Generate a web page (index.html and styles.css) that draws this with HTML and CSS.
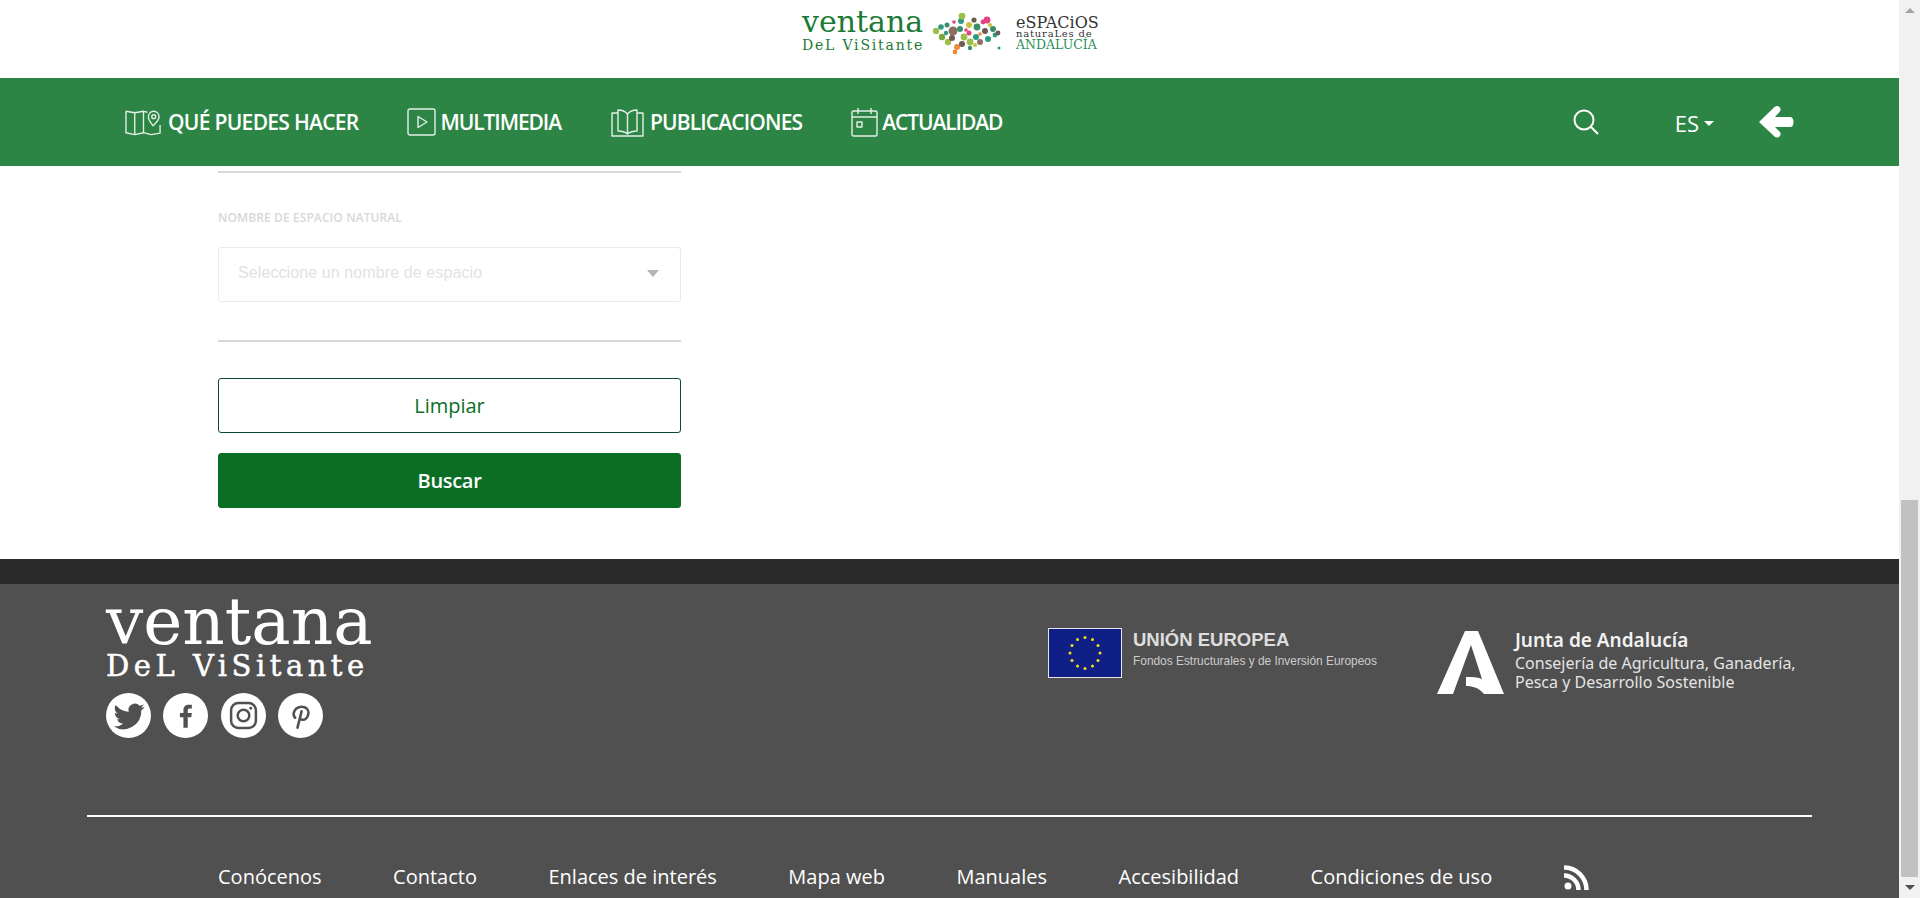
FILE: index.html
```html
<!DOCTYPE html>
<html lang="es">
<head>
    <meta charset="UTF-8">
    <title>Ventana del Visitante</title>
    <link rel="stylesheet" href="styles.css">
</head>
<body>

<div class="app">
    <div class="page">
        <header class="brand">
            <div class="brand-ventana">
                <span class="brand-big">ventana</span>
                <span class="brand-small">DeL ViSitante</span>
            </div>
            <svg class="brand-map" viewBox="0 0 70 42" width="70" height="42">
                <circle cx="3" cy="18" r="3.200" fill="#9bbf4a"/><circle cx="9" cy="24" r="3.200" fill="#7aa83c"/><circle cx="8" cy="14" r="2.800" fill="#2f9a7e"/>
                <circle cx="14" cy="12" r="2.500" fill="#3a8f6a"/><circle cx="15" cy="29" r="3.200" fill="#9bbf4a"/><circle cx="20" cy="18" r="4.500" fill="#8a6f62"/>
                <circle cx="21" cy="9" r="1.800" fill="#e8417f"/><circle cx="19" cy="25" r="3" fill="#6d5a50"/><circle cx="24" cy="34" r="3" fill="#f08a3c"/>
                <circle cx="22" cy="39" r="2.400" fill="#f08a3c"/><circle cx="28" cy="8" r="3" fill="#2f9a7e"/><circle cx="29" cy="3" r="3.400" fill="#9bbf4a"/>
                <circle cx="27" cy="16" r="3" fill="#3a8f6a"/><circle cx="31" cy="24" r="3.400" fill="#9bbf4a"/><circle cx="29" cy="31" r="3" fill="#6d5a50"/>
                <circle cx="36" cy="12" r="3" fill="#c9c23c"/><circle cx="36" cy="20" r="2.500" fill="#e8417f"/><circle cx="37" cy="29" r="3.400" fill="#9bbf4a"/>
                <circle cx="41" cy="7" r="2.600" fill="#6d5a50"/><circle cx="44" cy="14" r="3.400" fill="#3a8f6a"/><circle cx="43" cy="24" r="3" fill="#2f9a7e"/>
                <circle cx="47" cy="29" r="3" fill="#8a6f62"/><circle cx="50" cy="9" r="2.400" fill="#e8417f"/><circle cx="54" cy="7" r="3.400" fill="#e8417f"/>
                <circle cx="52" cy="18" r="3" fill="#6d5a50"/><circle cx="55" cy="26" r="3" fill="#2f9a7e"/><circle cx="60" cy="16" r="3" fill="#3a8f6a"/>
                <circle cx="62" cy="22" r="2.400" fill="#2f9a7e"/><circle cx="65" cy="20" r="2.400" fill="#6d5a50"/><circle cx="66" cy="35" r="1.500" fill="#2f9a7e"/>
                <circle cx="47" cy="21" r="1.800" fill="#f08a3c"/><circle cx="57" cy="12" r="2" fill="#c9c23c"/><circle cx="33" cy="17" r="1.800" fill="#e8417f"/>
                <circle cx="13" cy="20" r="2.200" fill="#2f9a7e"/><circle cx="37" cy="35" r="2.200" fill="#3a8f6a"/><circle cx="42" cy="32" r="2" fill="#c9c23c"/>
            </svg>
            <div class="brand-espacios">
                <span class="esp-top">eSPACiOS</span>
                <span class="esp-mid">naturaLes de</span>
                <span class="esp-low">ANDALUCÍA</span>
            </div>
        </header>

        <nav class="topnav">
            <a class="nav-item nav-map">
                <svg width="37" height="28" viewBox="0 0 38 28" fill="none" stroke="#e4efe7" stroke-width="1.400" stroke-linejoin="round"><path d="M1 3l9 1.500 9-1.500 4 1M1 3v22l9 2 9-2 8 2 9-1.500V17M10 4.500V27M19 3v22"/><path d="M29 18c-3-4-5-6-5-9.500a5.500 5.500 0 0 1 11 0c0 3.500-3 6-6 9.500z"/><circle cx="29.500" cy="8.500" r="2"/></svg>
                <span>QUÉ PUEDES HACER</span>
            </a>
            <a class="nav-item nav-media">
                <svg width="29" height="28" viewBox="0 0 29 28" fill="none" stroke="#e4efe7" stroke-width="1.400" stroke-linejoin="round"><rect x="1" y="1" width="27" height="26" rx="2"/><path d="M11 8.500v11l9-5.500z"/></svg>
                <span>MULTIMEDIA</span>
            </a>
            <a class="nav-item nav-pub">
                <svg width="33" height="29" viewBox="0 0 33 29" fill="none" stroke="#e4efe7" stroke-width="1.400" stroke-linejoin="round"><path d="M16.500 6C14 3 10 2 7 2v21c3.500 0 7 1 9.500 3 2.500-2 6-3 9.500-3V2c-3 0-7 1-9.500 4zM16.500 6v20"/><path d="M7 5H1v23h31V5h-6"/></svg>
                <span>PUBLICACIONES</span>
            </a>
            <a class="nav-item nav-news">
                <svg width="27" height="30" viewBox="0 0 27 30" fill="none" stroke="#e4efe7" stroke-width="1.400" stroke-linejoin="round"><rect x="1" y="4" width="25" height="25" rx="1.500"/><path d="M1 10h25M7 1v6M20 1v6"/><rect x="6" y="15" width="5" height="5"/></svg>
                <span>ACTUALIDAD</span>
            </a>
            <div class="nav-right">
                <svg class="nav-search" width="26" height="26" viewBox="0 0 26 26" fill="none" stroke="#fff" stroke-width="2"><circle cx="11" cy="11" r="9.500"/><path d="M18 18l7 7"/></svg>
                <span class="nav-lang">ES<i class="lang-caret"></i></span>
                <svg class="nav-back" width="36" height="36" viewBox="0 0 36 36" fill="#fff"><path d="M1 18L16 3.500c2-2 4-2 5.500-.500s1.500 3.500 0 5L17 13h15c2.500 0 3.500 2 3.500 5s-1 5-3.500 5H17l4.500 4.500c1.500 1.500 1.500 3.500 0 5s-3.500 1.500-5.500-.500L1 18z"/></svg>
            </div>
        </nav>

        <main class="content">
            <div class="form-col">
                <hr class="rule">
                <label class="field-label">NOMBRE DE ESPACIO NATURAL</label>
                <div class="select-box">
                    <span>Seleccione un nombre de espacio</span>
                    <i class="select-caret"></i>
                </div>
                <hr class="rule rule-low">
                <button class="btn btn-clear">Limpiar</button>
                <button class="btn btn-search">Buscar</button>
            </div>
        </main>

        <div class="footer-band"></div>

        <footer class="footer">
            <div class="footer-top">
                <div class="footer-left">
                    <div class="foot-logo">
                        <span class="foot-big">ventana</span>
                        <span class="foot-small">DeL ViSitante</span>
                    </div>
                    <div class="socials">
                        <a class="social"><svg viewBox="0 0 24 24" width="34" height="34" fill="#505050"><path d="M23 5.500c-.8.400-1.700.600-2.600.700.900-.600 1.600-1.400 2-2.500-.900.500-1.800.900-2.900 1.100A4.500 4.500 0 0 0 11.800 9C8.100 8.800 4.800 7 2.600 4.300c-1.200 2-.600 4.600 1.400 6-.700 0-1.400-.200-2-.600 0 2.200 1.500 4 3.600 4.500-.700.200-1.400.200-2 .100.600 1.800 2.200 3.100 4.200 3.100A9 9 0 0 1 1 19.300 12.800 12.800 0 0 0 20.700 8c.900-.700 1.700-1.500 2.300-2.500z"/></svg></a>
                        <a class="social"><svg viewBox="0 0 24 24" width="28" height="28" fill="#505050"><path d="M13.500 22v-9h3l.500-3.500h-3.500V7.300c0-1 .300-1.700 1.800-1.700H17V2.400c-.300 0-1.400-.100-2.700-.100-2.700 0-4.500 1.600-4.500 4.600v2.600h-3V13h3v9z"/></svg></a>
                        <a class="social"><svg viewBox="0 0 30 30" width="31" height="31" fill="none" stroke="#505050" stroke-width="2.400"><rect x="3" y="3" width="24" height="24" rx="7"/><circle cx="15" cy="15" r="5.600"/><circle cx="22" cy="8" r="1.400" fill="#505050" stroke="none"/></svg></a>
                        <a class="social"><svg viewBox="0 0 24 24" width="28" height="28" fill="none" stroke="#505050" stroke-width="2.200" stroke-linecap="round"><path d="M7 13.500C5.500 12 5.500 9.500 6.500 7.500 8 4.500 12 3.500 15 4.500c3 1 4 4 3 7-.800 2.500-3 4.500-5.500 3.500M12.500 8l-3.500 14"/></svg></a>
                    </div>
                </div>
                <div class="eu">
                    <svg class="eu-flag" width="74" height="50" viewBox="0 0 74 50">
                        <rect x=".5" y=".5" width="73" height="49" fill="#0f1f85" stroke="#e6e6ee"/>
                        <g fill="#f4e21c"><circle cx="37" cy="9.500" r="1.500"/><circle cx="44.500" cy="11.500" r="1.500"/><circle cx="50" cy="17.500" r="1.500"/><circle cx="52" cy="25" r="1.500"/><circle cx="50" cy="32.500" r="1.500"/><circle cx="44.500" cy="38" r="1.500"/><circle cx="37" cy="40.500" r="1.500"/><circle cx="29.500" cy="38" r="1.500"/><circle cx="24" cy="32.500" r="1.500"/><circle cx="22" cy="25" r="1.500"/><circle cx="24" cy="17.500" r="1.500"/><circle cx="29.500" cy="11.500" r="1.500"/></g>
                    </svg>
                    <div class="eu-text">
                        <strong>UNIÓN EUROPEA</strong>
                        <span>Fondos Estructurales y de Inversión Europeos</span>
                    </div>
                </div>
                <div class="junta">
                    <svg class="junta-logo" width="67" height="63" viewBox="0 0 67 63" fill="#fff"><path d="M0 63L28 0h13l26 63H47c-5-6-11-8-18-8v-9c6 0 11 0 16 2L34 14 16 63z"/></svg>
                    <div class="junta-text">
                        <strong>Junta de Andalucía</strong>
                        <span>Consejería de Agricultura, Ganadería,</span>
                        <span>Pesca y Desarrollo Sostenible</span>
                    </div>
                </div>
            </div>
            <div class="footer-line"></div>
            <div class="footer-links">
                <a>Conócenos</a>
                <a>Contacto</a>
                <a>Enlaces de interés</a>
                <a>Mapa web</a>
                <a>Manuales</a>
                <a>Accesibilidad</a>
                <a>Condiciones de uso</a>
                <svg class="rss" width="25" height="25" viewBox="0 0 25 25" fill="none" stroke="#fff" stroke-width="4.500"><circle cx="4" cy="21" r="3.500" fill="#fff" stroke="none"/><path d="M0 10.500A14.500 14.500 0 0 1 14.500 25M0 2.500A22.500 22.500 0 0 1 22.500 25"/></svg>
            </div>
        </footer>
    </div>

    <div class="scrollbar">
        <div class="scroll-btn"><i class="scroll-up"></i></div>
        <div class="scroll-track"><div class="scroll-thumb"></div></div>
        <div class="scroll-btn"><i class="scroll-down"></i></div>
    </div>
</div>

</body>
</html>
```

FILE: styles.css
```css
html, body {
    margin: 0;
    height: 100%;
    overflow: hidden;
    background-color: #ffffff;
    font-family: "Open Sans", Arial, sans-serif;
}
.app {
    display: flex;
    height: 898px;
}
.page {
    flex: 1;
    min-width: 0;
    overflow: hidden;
}

/* logos on top */
.brand {
    height: 78px;
    display: flex;
    align-items: flex-start;
    padding-left: 802px;
}
.brand-ventana {
    display: flex;
    flex-direction: column;
    width: 122px;
    color: #1c7a35;
    font-family: "DejaVu Serif", serif;
    padding-top: 9px;
}
.brand-big {
    font-size: 30px;
    line-height: 26px;
}
.brand-small {
    margin-top: 3px;
    font-size: 14px;
    line-height: 14px;
    letter-spacing: 1.800px;
    white-space: nowrap;
}
.brand-map {
    margin: 13px 0 0 9px;
}
.brand-espacios {
    display: flex;
    flex-direction: column;
    margin: 17px 0 0 13px;
    font-family: "DejaVu Serif", serif;
    color: #333333;
    white-space: nowrap;
}
.esp-top {
    font-size: 16px;
    line-height: 12px;
}
.esp-mid {
    font-size: 10px;
    line-height: 9px;
    letter-spacing: .8px;
}
.esp-low {
    margin-top: 2px;
    font-size: 12.500px;
    line-height: 10px;
    color: #2a9058;
}

/* green bar */
.topnav {
    height: 88px;
    background-color: #2c8544;
    display: flex;
    align-items: center;
    padding-left: 125px;
    color: #ffffff;
}
.nav-item {
    display: flex;
    align-items: center;
    font-size: 21px;
    font-weight: 600;
    letter-spacing: -.7px;
    color: #ffffff;
}
.nav-item svg {
    flex: none;
}
.nav-item span {
    margin: 0 0 1px 6px;
}
.nav-media {
    margin-left: 48px;
    letter-spacing: -1.100px;
}
.nav-media span {
    margin-left: 5px;
}
.nav-pub {
    margin-left: 50px;
    letter-spacing: -.85px;
}
.nav-news {
    margin-left: 49px;
    letter-spacing: -1.100px;
}
.nav-news span {
    margin-left: 4px;
}
.nav-right {
    display: flex;
    align-items: center;
    margin-left: auto;
    padding-right: 105px;
}
.nav-lang {
    display: flex;
    align-items: center;
    margin: 2px 0 0 76px;
    font-size: 22px;
}
.lang-caret {
    width: 0;
    height: 0;
    margin-left: 5px;
    border-left: 5px solid transparent;
    border-right: 5px solid transparent;
    border-top: 5px solid #ffffff;
}
.nav-back {
    margin-left: 44px;
}

/* search form */
.content {
    height: 388px;
    padding: 5px 0 0 218px;
}
.form-col {
    width: 463px;
}
.rule {
    margin: 0;
    border: 0;
    border-top: 2px solid #d8d8d8;
}
.rule-low {
    margin-top: 38px;
}
.field-label {
    display: block;
    margin-top: 37px;
    font-size: 12px;
    line-height: 16px;
    font-weight: 600;
    letter-spacing: .1px;
    color: #d8d8d8;
}
.select-box {
    display: flex;
    align-items: center;
    justify-content: space-between;
    box-sizing: border-box;
    height: 55px;
    margin-top: 21px;
    padding: 0 21px 4px 19px;
    border: 1px solid #e4ebe9;
    border-radius: 3px;
    font-family: "Liberation Sans", Arial, sans-serif;
    font-size: 16px;
    letter-spacing: .1px;
    color: #e2e2e2;
}
.select-caret {
    width: 0;
    height: 0;
    margin-top: 2px;
    border-left: 6px solid transparent;
    border-right: 6px solid transparent;
    border-top: 7px solid #b3b3b3;
}
.btn {
    display: block;
    box-sizing: border-box;
    width: 100%;
    height: 55px;
    border-radius: 3px;
    font-family: "Open Sans", Arial, sans-serif;
    font-size: 20px;
    cursor: pointer;
}
.btn-clear {
    margin-top: 36px;
    background-color: #ffffff;
    border: 1px solid #0b4a2a;
    color: #0a6f24;
}
.btn-search {
    margin-top: 20px;
    background-color: #0a6f24;
    border: 1px solid #0a6f24;
    color: #ffffff;
    font-weight: 600;
    letter-spacing: -.3px;
}

/* footer */
.footer-band {
    height: 25px;
    background-color: #2b2b2b;
}
.footer {
    height: 314px;
    background-color: #505050;
    color: #ffffff;
}
.footer-top {
    display: flex;
    height: 231px;
    padding-left: 106px;
}
.footer-left {
    width: 942px;
    padding-top: 13px;
}
.foot-logo {
    display: flex;
    flex-direction: column;
    font-family: "DejaVu Serif", serif;
    color: #ffffff;
}
.foot-big {
    font-size: 66px;
    line-height: 50px;
}
.foot-small {
    margin-top: 6px;
    font-size: 29px;
    line-height: 26px;
    letter-spacing: 4.500px;
    white-space: nowrap;
    -webkit-text-stroke: .5px #ffffff;
}
.socials {
    display: flex;
    gap: 12.400px;
    margin-top: 14px;
}
.social {
    display: flex;
    align-items: center;
    justify-content: center;
    width: 45px;
    height: 45px;
    border-radius: 50%;
    background-color: #ffffff;
}
.eu {
    display: flex;
    width: 389px;
    padding-top: 44px;
}
.eu-flag {
    flex: none;
}
.eu-text {
    display: flex;
    flex-direction: column;
    margin-left: 11px;
    font-family: "Liberation Sans", Arial, sans-serif;
    color: #dddddd;
    white-space: nowrap;
}
.eu-text strong {
    font-size: 18.500px;
    line-height: 22px;
    margin-top: 1px;
}
.eu-text span {
    font-size: 11.900px;
    line-height: 18px;
    color: #cccccc;
    margin-top: 1px;
}
.junta {
    display: flex;
    padding-top: 47px;
}
.junta-logo {
    flex: none;
}
.junta-text {
    display: flex;
    flex-direction: column;
    margin-left: 11px;
    margin-top: -4px;
    font-family: "Noto Sans", Arial, sans-serif;
    font-size: 16px;
    line-height: 19px;
    color: #e4e4e4;
    white-space: nowrap;
}
.junta-text strong {
    font-size: 19px;
    line-height: 27px;
    font-weight: 600;
    color: #f2f2f2;
}
.footer-line {
    height: 2px;
    margin: 0 87px;
    background-color: #ffffff;
}
.footer-links {
    display: flex;
    align-items: center;
    gap: 71.500px;
    padding: 47px 0 0 218px;
    font-size: 20px;
    line-height: 26px;
}

/* the browser scrollbar at the right */
.scrollbar {
    flex: none;
    width: 21px;
    display: flex;
    flex-direction: column;
    background-color: #f1f1f1;
}
.scroll-btn {
    height: 21px;
    display: flex;
    align-items: center;
    justify-content: center;
}
.scroll-up, .scroll-down {
    width: 0;
    height: 0;
    border-left: 5px solid transparent;
    border-right: 5px solid transparent;
}
.scroll-up {
    border-bottom: 5px solid #a3a3a3;
}
.scroll-down {
    border-top: 5px solid #505050;
}
.scroll-track {
    flex: 1;
    padding-top: 479px;
}
.scroll-thumb {
    height: 377px;
    margin: 0 2px;
    background-color: #c1c1c1;
}
```
